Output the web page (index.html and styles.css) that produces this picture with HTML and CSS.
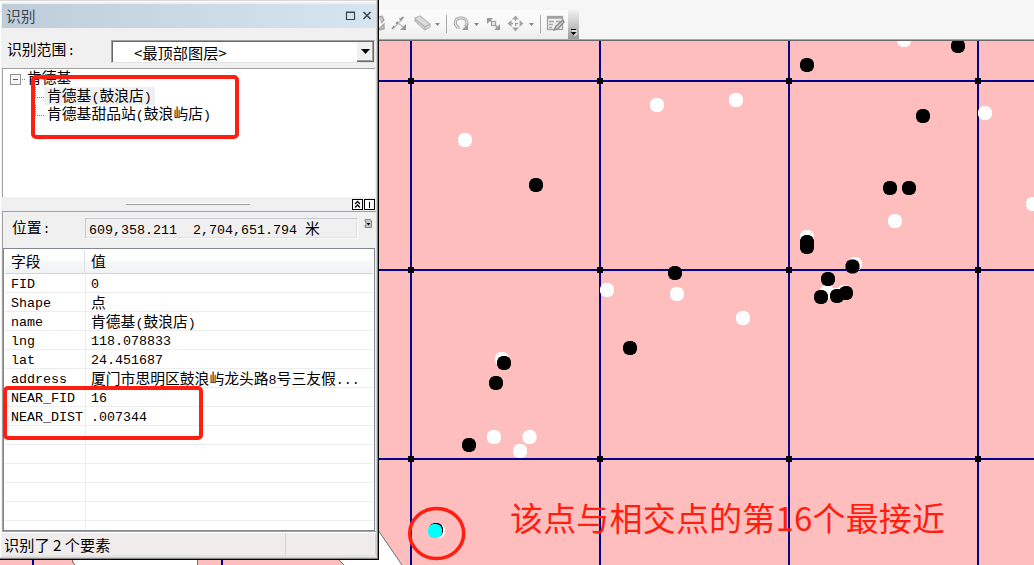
FILE: index.html
```html
<!DOCTYPE html>
<html lang="zh-CN">
<head>
<meta charset="utf-8">
<title>识别</title>
<link rel="stylesheet" href="styles.css">
</head>
<body>
<svg class="map" width="1034" height="565" viewBox="0 0 1034 565">
  <defs>
    <path id="dot" d="M-2 -7H2L5 -5.500L5.500 -5L7 -2V2L5.500 5L5 5.500L2 7H-2L-5 5.500L-5.500 5L-7 2V-2L-5.500 -5L-5 -5.500Z"/>
    <path id="node" d="M-3 -3H3V3H-3Z"/>
  </defs>
  <rect width="1034" height="565" fill="#ffbebe"/>
  <path d="M73 550V560L75 565H197V550ZM320 540L344 565H402L378 530Z" fill="#fff"/>
  <path d="M72.500 559V562L75 565M197.500 559V565M339 560L344 565M378 530L402 565" fill="none" stroke="#6e6e6e"/>
  <path d="M33 540V565M222 540V565M411 40V565M600 40V565M789 40V565M978 40V565M378 81H1034M378 270H1034M378 459H1034" stroke="#00008b" stroke-width="2"/>
  <g fill="#000">
    <use href="#node" x="411" y="81"/><use href="#node" x="600" y="81"/><use href="#node" x="789" y="81"/><use href="#node" x="978" y="81"/>
    <use href="#node" x="411" y="270"/><use href="#node" x="600" y="270"/><use href="#node" x="789" y="270"/><use href="#node" x="978" y="270"/>
    <use href="#node" x="411" y="459"/><use href="#node" x="600" y="459"/><use href="#node" x="789" y="459"/><use href="#node" x="978" y="459"/>
  </g>
  <g fill="#fff">
    <use href="#dot" x="465" y="140"/><use href="#dot" x="657" y="105"/><use href="#dot" x="736" y="100"/><use href="#dot" x="904" y="40"/>
    <use href="#dot" x="985" y="113"/><use href="#dot" x="1033" y="204"/><use href="#dot" x="895" y="221"/><use href="#dot" x="807" y="237"/>
    <use href="#dot" x="855" y="264"/><use href="#dot" x="827" y="292"/><use href="#dot" x="844" y="292"/><use href="#dot" x="836" y="295"/>
    <use href="#dot" x="607" y="290"/><use href="#dot" x="677" y="294"/><use href="#dot" x="743" y="318"/><use href="#dot" x="502" y="359"/>
    <use href="#dot" x="494" y="437"/><use href="#dot" x="529.500" y="437"/><use href="#dot" x="520" y="451"/><use href="#dot" x="438" y="531"/>
  </g>
  <g fill="#000">
    <use href="#dot" x="807" y="65"/><use href="#dot" x="958" y="46"/><use href="#dot" x="923" y="116"/><use href="#dot" x="890" y="188"/>
    <use href="#dot" x="909" y="188"/><use href="#dot" x="536" y="185"/><use href="#dot" x="807" y="242"/><use href="#dot" x="807" y="247"/>
    <use href="#dot" x="852.500" y="266.500"/><use href="#dot" x="828" y="279"/><use href="#dot" x="821" y="297"/><use href="#dot" x="837" y="296"/>
    <use href="#dot" x="846" y="293"/><use href="#dot" x="675" y="273"/><use href="#dot" x="630" y="348"/><use href="#dot" x="504" y="363"/>
    <use href="#dot" x="496" y="383"/><use href="#dot" x="469" y="445"/><use href="#dot" x="436" y="530"/>
  </g>
  <use href="#dot" x="435" y="531" fill="#0ff"/>
  <ellipse cx="436.700" cy="533.500" rx="27" ry="25" fill="none" stroke="#ff1e10" stroke-width="3.500"/>
  <text class="note" x="510" y="530.500" textLength="435">该点与相交点的第16个最接近</text>
</svg>

<header class="toolbar">
  <div class="tools">
    <svg width="190" height="29" viewBox="378 10 190 29" fill="none" stroke="#a2a2a2" stroke-width="1.300">
      <path d="M379 17l3-1 2 4-3 3M378 30l6-1v-5z" fill="#c5c5c5"/>
      <path d="M393 29L404 17M399 18l3 3M396 22l9 6" stroke="#bbb"/>
      <path d="M392 29l2-3M396 24l2-2M400 20l3-3" stroke="#888"/>
      <path d="M400 30h6v-6z" fill="#999" stroke="none"/>
      <path d="M415 18l5-2 10 8v3l-5 3-10-9z" fill="#dcdcdc" stroke="#bdbdbd"/>
      <path d="M415 19l10 8 5-3M425 27v3" stroke="#b2b2b2"/>
      <path d="M435 23h5l-2.500 3zM474 23h5l-2.500 3zM529 23h5l-2.500 3z" fill="#888" stroke="none"/>
      <path d="M446.500 15v18M540.500 15v18" stroke="#aaa" stroke-width="1"/>
      <path d="M458 29v-2c-4-2-4-9 3-9s7 7 4 9" stroke="#a9a9a9" stroke-width="3"/>
      <path d="M458 29v-2c-4-2-4-9 3-9s7 7 4 9" stroke="#e4e4e4" stroke-width="1.200"/>
      <path d="M462 30h6v-6z" fill="#999" stroke="none"/>
      <path d="M490 20l8 8" stroke="#999" stroke-width="1.500"/>
      <path d="M487 18h6l-6 6zM500 30h-6l6-6z" fill="#999" stroke="none"/>
      <rect x="491.500" y="21.500" width="4" height="4" fill="#eee"/>
      <path d="M515.500 18v11M510 23.500h11" stroke-dasharray="3 2"/>
      <path d="M515.500 15.500l3.500 4h-7zM515.500 31.500l3.500-4h-7zM507.500 23.500l4-3.500v7zM523.500 23.500l-4-3.500v7z" fill="#a5a5a5" stroke="none"/>
      <rect x="547.500" y="16.500" width="15" height="13" fill="#eee"/>
      <path d="M547 17.500h16" stroke-width="2.500"/>
      <path d="M549 21.500h5M556 21.500h5M549 24.500h4M549 27.500h3" stroke="#aaa"/>
      <path d="M554 30l2-4 7-6 1 2-6 7z" fill="#c8c8c8" stroke="#8c8c8c"/>
    </svg>
  </div>
  <div class="overflow">
    <svg width="11" height="29" viewBox="0 0 11 29"><path d="M3 19.500h5M3.500 22.500h4l-2 2z" fill="#000" stroke="#000"/><path d="M4 21h5M6.500 26l3-3" stroke="#fff"/></svg>
  </div>
</header>

<main class="window">
  <div class="titlebar">
    <span class="title">识别</span>
    <svg width="29" height="24" viewBox="0 0 29 24" fill="none" stroke="#3b4854"><path d="M1.500 8.500h8v7h-8zM1 8h9" stroke-width="1.200"/><path d="M18.500 8l7 7M25.500 8l-7 7" stroke-width="1.600"/></svg>
  </div>
  <div class="scope">
    <span class="scope-label">识别范围<span class="mono">:</span></span>
    <div class="combo">
      <span class="combo-text">&lt;最顶部图层&gt;</span>
      <span class="combo-btn"><svg width="9" height="5" viewBox="0 0 9 5"><path d="M0 0h9L4.500 5z"/></svg></span>
    </div>
  </div>
  <div class="tree">
    <div class="tree-row root"><svg width="17" height="18" viewBox="0 0 17 18" fill="none"><rect x=".5" y="6.500" width="10" height="10" fill="#f6f6f6" stroke="#919191"/><path d="M3 11.500h5" stroke="#3a559c"/><path d="M12 11.500h4" stroke="#888" stroke-dasharray="1 1"/></svg><span>肯德基</span></div>
    <div class="tree-row child"><span class="selected">肯德基<span class="mono">(</span>鼓浪店<span class="mono">)</span></span></div>
    <div class="tree-row child"><span>肯德基甜品站<span class="mono">(</span>鼓浪屿店<span class="mono">)</span></span></div>
  </div>
  <div class="splitter">
    <span class="grip"></span>
    <svg class="split-btns" width="24" height="13" viewBox="0 0 24 13" fill="#fff" stroke="#000"><rect x=".5" y="1.500" width="10" height="10"/><rect x="12.500" y="1.500" width="10" height="10"/><path d="M3 6l2.500-2.500L8 6M3 9.500L5.500 7 8 9.500" fill="none" stroke-width="1.300"/><path d="M17.500 4v6"/></svg>
  </div>
  <div class="details">
    <div class="location">
      <span class="loc-label">位置<span class="mono">:</span></span>
      <div class="loc-field"><span class="mono">609,358.211&nbsp; 2,704,651.794 </span>米</div>
      <svg class="loc-btn" width="9" height="10" viewBox="0 0 9 10"><path d="M1 .5h5.500L7.500 2v6.500H1V6.500h1V2.500H1z" fill="#c8c8c8" stroke="#888"/><path d="M2.500 4h4l-2 2.500z"/></svg>
    </div>
    <div class="grid">
      <div class="row head"><span class="key">字段</span><span class="val">值</span></div>
      <div class="row"><span class="key mono">FID</span><span class="val mono">0</span></div>
      <div class="row"><span class="key mono">Shape</span><span class="val">点</span></div>
      <div class="row"><span class="key mono">name</span><span class="val">肯德基<span class="mono">(</span>鼓浪店<span class="mono">)</span></span></div>
      <div class="row"><span class="key mono">lng</span><span class="val mono">118.078833</span></div>
      <div class="row"><span class="key mono">lat</span><span class="val mono">24.451687</span></div>
      <div class="row"><span class="key mono">address</span><span class="val">厦门市思明区鼓浪屿龙头路<span class="mono">8</span>号三友假<span class="mono">...</span></span></div>
      <div class="row"><span class="key mono">NEAR_FID</span><span class="val mono">16</span></div>
      <div class="row"><span class="key mono">NEAR_DIST</span><span class="val mono">.007344</span></div>
      <div class="row"><span class="key"></span><span class="val"></span></div>
      <div class="row"><span class="key"></span><span class="val"></span></div>
      <div class="row"><span class="key"></span><span class="val"></span></div>
      <div class="row"><span class="key"></span><span class="val"></span></div>
      <div class="row"><span class="key"></span><span class="val"></span></div>
      <div class="row last"><span class="key"></span></div>
    </div>
  </div>
  <footer class="status"><span class="status-text">识别了 2 个要素</span><span class="status-cell"></span></footer>
  <div class="mark mark-tree"></div>
  <div class="mark mark-near"></div>
</main>
</body>
</html>
```

FILE: styles.css
```css
* { box-sizing: border-box; }

body {
  margin: 0;
  width: 1034px;
  height: 565px;
  overflow: hidden;
  position: relative;
  font: 14.8px/18px "Noto Sans CJK SC", sans-serif;
  color: #000;
}

svg { display: block; flex: none; }

.mono {
  font-family: "Liberation Mono", monospace;
  font-size: 13.33px;
}

span > .mono { line-height: 1; }

.map { position: absolute; left: 0; top: 0; }

.note {
  font-family: "Noto Sans CJK SC", sans-serif;
  font-size: 33px;
  fill: #ff1e10;
}

.toolbar {
  position: relative;
  display: flex;
  height: 41px;
  padding: 10px 0 0 378px;
  background: #f6f6f6;
  border-bottom: 1px solid #696969;
  box-shadow: inset 0 -1px #a5a5a8;
}

.tools {
  width: 190px;
  height: 29px;
  overflow: hidden;
  background: linear-gradient(#fcfcfc, #f7f7f7 55%, #ebebeb);
}

.overflow {
  width: 11px;
  height: 29px;
  background: linear-gradient(#f0f0f0, #c8c8c8 50%, #999);
}

/* Floating identify window */
.window {
  position: absolute;
  left: 0;
  top: 0;
  width: 379px;
  height: 560px;
  padding: 4px 0 0 2px;
  display: flex;
  flex-direction: column;
  background: #f0f0f0;
  border-right: 1px solid #000;
  border-bottom: 1px solid #000;
  box-shadow: inset -1px -1px #858585, inset -2px -2px #d0d0d0, inset 0 1px #d8d8d8, inset 1px 2px #fff;
}

.titlebar {
  flex: none;
  width: 374px;
  height: 24px;
  padding: 0 2px 0 4px;
  display: flex;
  justify-content: space-between;
  background: linear-gradient(90deg, #bfcddb, #d7e4f2);
}

.title { line-height: 24px; color: #3b4854; }

.scope {
  flex: none;
  display: flex;
  justify-content: space-between;
  width: 373px;
  height: 40px;
  padding: 12px 0 4px 5px;
}

.scope-label { line-height: 18px; }
.scope-label .mono, .loc-label .mono { padding-left: 1px; }

.combo {
  width: 264px;
  height: 23px;
  display: flex;
  justify-content: space-between;
  background: #fff;
  border: 1px solid #a0a0a0;
  border-bottom-color: #e3e3e3;
  border-right-color: #e3e3e3;
  box-shadow: inset 1px 1px #696969;
}

.combo-text { padding-left: 22px; font-size: 15.2px; line-height: 23px; }

.combo-btn {
  width: 17px;
  height: 20px;
  margin-top: 1px;
  display: flex;
  align-items: center;
  justify-content: center;
  background: #f0f0f0;
  border-right: 1px solid #696969;
  border-bottom: 1px solid #696969;
  box-shadow: inset -1px -1px #a0a0a0;
}

.tree {
  flex: none;
  width: 373px;
  height: 129px;
  background: #fff;
  border-top: 1px solid #a0a0a0;
  border-left: 1px solid #a0a0a0;
}

.tree-row { display: flex; height: 18px; }
.root { padding-left: 7px; line-height: 15px; }
.root svg { margin-top: -1px; }

.child { padding-left: 41px; position: relative; }
.child::before {
  content: "";
  position: absolute;
  left: 32px;
  top: 0;
  width: 8px;
  height: 10px;
  border-left: 1px dotted #888;
  border-bottom: 1px dotted #888;
}
.child > span { height: 18px; padding: 0 3px; line-height: 15px; white-space: nowrap; }
.selected { background: #f0f0f0; }

.splitter {
  flex: none;
  display: flex;
  width: 374px;
  height: 14px;
  padding: 1px 0 0 124px;
  justify-content: space-between;
}

.grip {
  width: 124px;
  height: 2px;
  margin-top: 5px;
  border-top: 1px solid #fff;
  border-bottom: 1px solid #a0a0a0;
}

.details {
  flex: none;
  width: 374px;
  height: 320px;
  border-top: 1px solid #a0a0a0;
  border-left: 1px solid #a0a0a0;
}

.location {
  display: flex;
  height: 36px;
  padding: 6px 2px 0 9px;
}

.loc-label { width: 73px; line-height: 17px; }

.loc-field {
  width: 273px;
  height: 21px;
  padding-left: 3px;
  line-height: 17px;
  border: 1px solid #c8c8d0;
  border-right-color: #fff;
  border-bottom-color: #fff;
  box-shadow: inset -1px -1px #dedee4;
  white-space: pre;
}

.loc-btn { margin: 1px 0 0 6px; }

.grid {
  width: 372px;
  height: 283px;
  padding: 1px 1px 0;
  background: #fff;
  border: 1px solid #828790;
  overflow: hidden;
}

.row {
  display: flex;
  height: 19px;
  line-height: 19px;
  border-bottom: 1px solid #ededed;
}

.row .key {
  width: 81px;
  padding-left: 6px;
  border-right: 1px solid #ededed;
  white-space: nowrap;
}

.row .key.mono { line-height: 22px; }
.row .val { flex: 1; padding-left: 5px; white-space: nowrap; line-height: 17px; }
.row .val.mono { line-height: 22px; }

.row.head {
  height: 24px;
  background: linear-gradient(#fff 45%, #f7f8fa 46%, #f1f2f4);
  border-bottom-color: #d5d5d5;
}
.row.head span { line-height: 22px; }
.row.head .key { width: 80px; border-right-color: #dedfe1; }
.row.head .val { padding-left: 6px; }
.row.last { border: 0; }

.status {
  flex: none;
  display: flex;
  width: 374px;
  height: 26px;
  background: #f0eceb;
  border-top: 1px solid #a0a0a0;
  border-bottom: 2px solid #e4e4e4;
  box-shadow: inset 0 1px #fff;
}

.status-text { width: 283px; padding-left: 2px; font-size: 15.2px; line-height: 25px; }

.status-cell {
  flex: 1;
  margin-top: 1px;
  border-left: 1px solid #d5d5d5;
  border-right: 1px solid #d5d5d5;
}

/* Hand-drawn red highlights over the window */
.mark { position: absolute; border: 4px solid #ff1e10; border-radius: 5px; }
.mark-tree { left: 31px; top: 75px; width: 208px; height: 64px; }
.mark-near { left: 3px; top: 386px; width: 200px; height: 54px; }
```
